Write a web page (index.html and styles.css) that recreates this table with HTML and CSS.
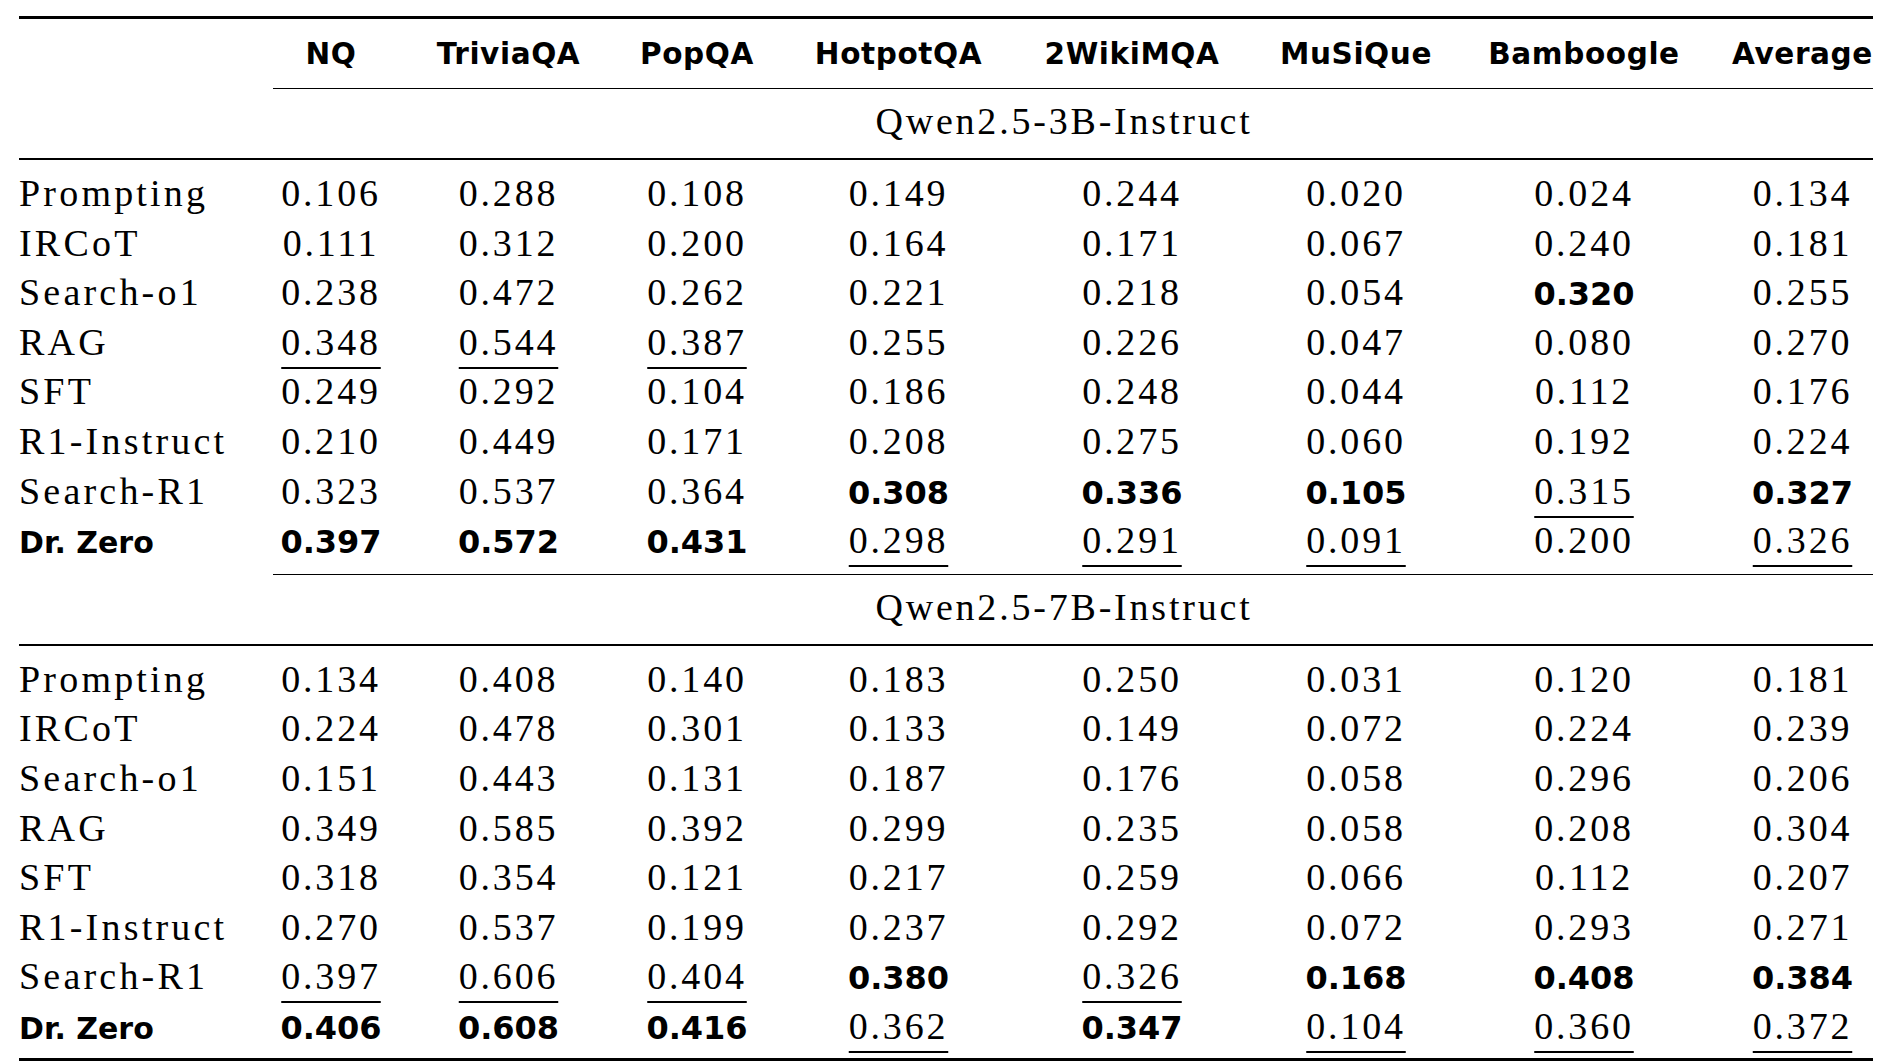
FILE: index.html
```html
<!DOCTYPE html>
<html lang="en">
<head>
<meta charset="utf-8">
<title>Results</title>
<link rel="stylesheet" href="styles.css">
</head>
<body>
<table class="results">
  <colgroup>
    <col class="c-label"><col class="c-nq"><col class="c-tq"><col class="c-pop"><col class="c-hot"><col class="c-wiki"><col class="c-mus"><col class="c-bam"><col class="c-avg">
  </colgroup>
  <thead>
    <tr class="head">
      <th class="label"></th><th class="nq">NQ</th><th>TriviaQA</th><th>PopQA</th><th>HotpotQA</th><th>2WikiMQA</th><th>MuSiQue</th><th>Bamboogle</th><th class="avg">Average</th>
    </tr>
  </thead>
  <tbody>
    <tr class="group"><td class="label"></td><td class="gname" colspan="8">Qwen2.5-3B-Instruct</td></tr>
    <tr class="row first"><td class="label">Prompting</td><td class="nq">0.106</td><td>0.288</td><td>0.108</td><td>0.149</td><td>0.244</td><td>0.020</td><td>0.024</td><td class="avg">0.134</td></tr>
    <tr class="row"><td class="label">IRCoT</td><td class="nq">0.111</td><td>0.312</td><td>0.200</td><td>0.164</td><td>0.171</td><td>0.067</td><td>0.240</td><td class="avg">0.181</td></tr>
    <tr class="row"><td class="label">Search-o1</td><td class="nq">0.238</td><td>0.472</td><td>0.262</td><td>0.221</td><td>0.218</td><td>0.054</td><td><span class="b">0.320</span></td><td class="avg">0.255</td></tr>
    <tr class="row"><td class="label">RAG</td><td class="nq"><span class="u">0.348</span></td><td><span class="u">0.544</span></td><td><span class="u">0.387</span></td><td>0.255</td><td>0.226</td><td>0.047</td><td>0.080</td><td class="avg">0.270</td></tr>
    <tr class="row"><td class="label">SFT</td><td class="nq">0.249</td><td>0.292</td><td>0.104</td><td>0.186</td><td>0.248</td><td>0.044</td><td>0.112</td><td class="avg">0.176</td></tr>
    <tr class="row"><td class="label">R1-Instruct</td><td class="nq">0.210</td><td>0.449</td><td>0.171</td><td>0.208</td><td>0.275</td><td>0.060</td><td>0.192</td><td class="avg">0.224</td></tr>
    <tr class="row"><td class="label">Search-R1</td><td class="nq">0.323</td><td>0.537</td><td>0.364</td><td><span class="b">0.308</span></td><td><span class="b">0.336</span></td><td><span class="b">0.105</span></td><td><span class="u">0.315</span></td><td class="avg"><span class="b">0.327</span></td></tr>
    <tr class="row last cmid"><td class="label"><span class="b">Dr. Zero</span></td><td class="nq"><span class="b">0.397</span></td><td><span class="b">0.572</span></td><td><span class="b">0.431</span></td><td><span class="u">0.298</span></td><td><span class="u">0.291</span></td><td><span class="u">0.091</span></td><td>0.200</td><td class="avg"><span class="u">0.326</span></td></tr>

    <tr class="group"><td class="label"></td><td class="gname" colspan="8">Qwen2.5-7B-Instruct</td></tr>
    <tr class="row first"><td class="label">Prompting</td><td class="nq">0.134</td><td>0.408</td><td>0.140</td><td>0.183</td><td>0.250</td><td>0.031</td><td>0.120</td><td class="avg">0.181</td></tr>
    <tr class="row"><td class="label">IRCoT</td><td class="nq">0.224</td><td>0.478</td><td>0.301</td><td>0.133</td><td>0.149</td><td>0.072</td><td>0.224</td><td class="avg">0.239</td></tr>
    <tr class="row"><td class="label">Search-o1</td><td class="nq">0.151</td><td>0.443</td><td>0.131</td><td>0.187</td><td>0.176</td><td>0.058</td><td>0.296</td><td class="avg">0.206</td></tr>
    <tr class="row"><td class="label">RAG</td><td class="nq">0.349</td><td>0.585</td><td>0.392</td><td>0.299</td><td>0.235</td><td>0.058</td><td>0.208</td><td class="avg">0.304</td></tr>
    <tr class="row"><td class="label">SFT</td><td class="nq">0.318</td><td>0.354</td><td>0.121</td><td>0.217</td><td>0.259</td><td>0.066</td><td>0.112</td><td class="avg">0.207</td></tr>
    <tr class="row"><td class="label">R1-Instruct</td><td class="nq">0.270</td><td>0.537</td><td>0.199</td><td>0.237</td><td>0.292</td><td>0.072</td><td>0.293</td><td class="avg">0.271</td></tr>
    <tr class="row"><td class="label">Search-R1</td><td class="nq"><span class="u">0.397</span></td><td><span class="u">0.606</span></td><td><span class="u">0.404</span></td><td><span class="b">0.380</span></td><td><span class="u">0.326</span></td><td><span class="b">0.168</span></td><td><span class="b">0.408</span></td><td class="avg"><span class="b">0.384</span></td></tr>
    <tr class="row last bottom"><td class="label"><span class="b">Dr. Zero</span></td><td class="nq"><span class="b">0.406</span></td><td><span class="b">0.608</span></td><td><span class="b">0.416</span></td><td><span class="u">0.362</span></td><td><span class="b">0.347</span></td><td><span class="u">0.104</span></td><td><span class="u">0.360</span></td><td class="avg"><span class="u">0.372</span></td></tr>
  </tbody>
</table>
</body>
</html>
```

FILE: styles.css
```css
html, body {
  margin: 0;
  padding: 0;
  background: #ffffff;
}

body {
  padding: 16px 0 0 19px;
  color: #000000;
  font-family: "Liberation Serif", "DejaVu Serif", serif;
}

.results {
  table-layout: fixed;
  width: 1854px;
  border-collapse: separate;
  border-spacing: 0;
  border-top: 3px solid #000000;
  font-family: "Liberation Serif", "DejaVu Serif", serif;
}

.c-label { width: 254px; }
.c-nq    { width: 134px; }
.c-tq    { width: 203px; }
.c-pop   { width: 174px; }
.c-hot   { width: 229px; }
.c-wiki  { width: 238px; }
.c-mus   { width: 210px; }
.c-bam   { width: 246px; }
.c-avg   { width: 166px; }

.results th,
.results td {
  padding: 0;
  text-align: center;
  vertical-align: baseline;
  white-space: nowrap;
}

.results .nq  { padding-right: 18px; }
.results .avg { padding-left: 25px; }
.results .label { text-align: left; }

/* header row */
.head th {
  height: 67px;
  padding-top: 2px;
  line-height: 67px;
  font-family: "DejaVu Sans", "Noto Sans", sans-serif;
  font-weight: 700;
  font-size: 29.5px;
  letter-spacing: 0.6px;
  border-bottom: 1px solid #000000;
}
.head th.label { border-bottom-color: transparent; }

/* group label rows */
.group td {
  height: 64px;
  padding-bottom: 5px;
  line-height: 64px;
  font-size: 38px;
  letter-spacing: 2.8px;
  border-bottom: 2px solid #000000;
}
.group td.gname { padding-right: 18px; }

/* data rows */
.row td {
  line-height: 49.6px;
  font-size: 38px;
  letter-spacing: 2.8px;
}
.row td.label { letter-spacing: 3.2px; }
.row.first td { padding-top: 9px; }
.row.last td { padding-bottom: 8px; }
.row.last.bottom td { padding-bottom: 6px; }

.row.cmid td { border-bottom: 1px solid #000000; }
.row.cmid td.label { border-bottom-color: transparent; }
.row.bottom td { border-bottom: 3px solid #000000; }

.b {
  font-family: "DejaVu Sans", "Noto Sans", sans-serif;
  font-weight: 700;
  font-size: 32px;
  line-height: 32px;
  letter-spacing: 0;
}
.row td.label .b { font-size: 30px; letter-spacing: 0; }

.u {
  text-decoration: underline;
  text-decoration-thickness: 1.6px;
  text-underline-offset: 12px;
}
```
